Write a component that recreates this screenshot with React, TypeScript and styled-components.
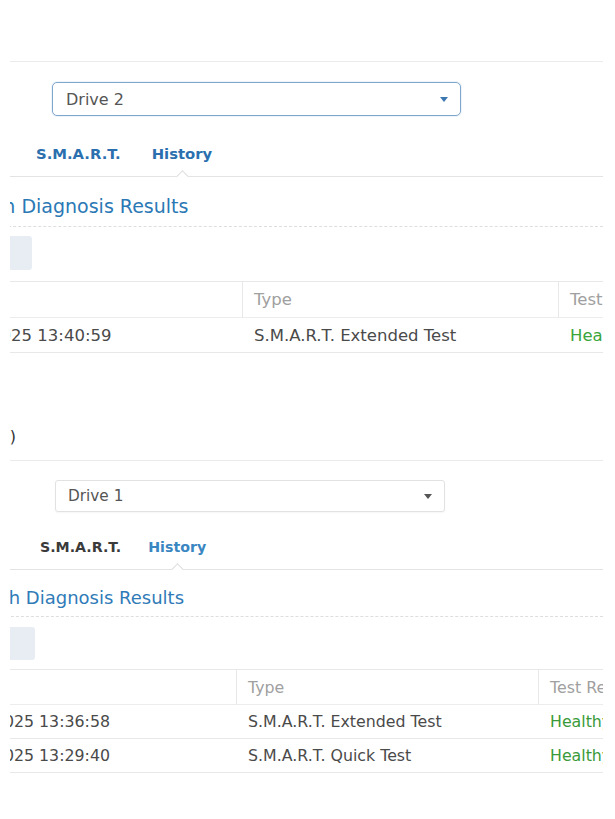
import React from "react";
import styled, { createGlobalStyle } from "styled-components";

const GlobalStyle = createGlobalStyle`
  html, body { margin: 0; padding: 0; background: #ffffff; }
  body { font-family: "DejaVu Sans", Verdana, sans-serif; color: #444; }
  #root { width: 615px; height: 819px; overflow: hidden; }
`;

interface PanelCfg {
  height: number;
  headerH: number;
  heading?: string;
  headingEnd: number;
  headingPadBottom: number;
  selectGap: number;
  selectLeft: number;
  selectWidth: number;
  selectHeight: number;
  selectFont: number;
  selectPad: number;
  focused: boolean;
  drive: string;
  tabGap: number;
  tabH: number;
  tabPad: number;
  tabSpacing: number;
  tabFont: number;
  smartColor: string;
  historyColor: string;
  titleFont: number;
  titleLine: number;
  titlePadTop: number;
  titlePadBottom: number;
  titleShift: number;
  titleColor: string;
  btnGap: number;
  btnH: number;
  btnRight: number;
  tableGap: number;
  tableShift: number;
  col1: number;
  col2: number;
  headH: number;
  rowH: number;
  cellFont: number;
  datePad: number;
  green: string;
  rows: [string, string, string][];
}

const Page = styled.main`
  width: 615px;
  height: 819px;
  display: flex;
  flex-direction: column;
  background: #fff;
`;

const Shot = styled.section<{ $h: number }>`
  margin-left: 10px;
  width: 593px;
  height: ${(p) => p.$h}px;
  overflow: hidden;
  display: flex;
  flex-direction: column;
  flex-shrink: 0;
`;

const Header = styled.header<{ $h: number; $pb: number }>`
  height: ${(p) => p.$h}px;
  box-sizing: content-box;
  border-bottom: 1px solid #ebebeb;
  display: flex;
  align-items: flex-end;
  flex-shrink: 0;
  & > div {
    margin-bottom: ${(p) => p.$pb}px;
  }
`;

const HeadingClip = styled.div<{ $end: number }>`
  width: ${(p) => p.$end}px;
  display: flex;
  justify-content: flex-end;
  white-space: nowrap;
  font-size: 16px;
  line-height: 20px;
  color: #333;
`;

const SelectRow = styled.div<{ $gap: number; $left: number }>`
  margin-top: ${(p) => p.$gap}px;
  padding-left: ${(p) => p.$left}px;
  display: flex;
  flex-shrink: 0;
`;

const Select = styled.div<{
  $w: number;
  $h: number;
  $focused: boolean;
  $font: number;
  $pad: number;
}>`
  box-sizing: border-box;
  width: ${(p) => p.$w}px;
  height: ${(p) => p.$h}px;
  border: 1px solid ${(p) => (p.$focused ? "#7fa6cc" : "#e2e2e2")};
  border-radius: ${(p) => (p.$focused ? 5 : 3)}px;
  box-shadow: ${(p) =>
    p.$focused ? "0 0 0 1px rgba(140,180,220,0.15)" : "0 1px 2px rgba(0,0,0,0.04)"};
  padding: 0 12px 0 ${(p) => p.$pad}px;
  display: flex;
  align-items: center;
  justify-content: space-between;
  font-size: ${(p) => p.$font}px;
  color: #555;
  background: #fff;
`;

const Caret = styled.span<{ $focused: boolean }>`
  width: 0;
  height: 0;
  border-left: 4.5px solid transparent;
  border-right: 4.5px solid transparent;
  border-top: 5px solid ${(p) => (p.$focused ? "#3b78b2" : "#555")};
`;

const TabBar = styled.nav<{ $gap: number; $h: number; $pad: number; $spacing: number }>`
  margin-top: ${(p) => p.$gap}px;
  height: ${(p) => p.$h}px;
  box-sizing: content-box;
  border-bottom: 1px solid #e3e3e3;
  padding-left: ${(p) => p.$pad}px;
  display: flex;
  align-items: center;
  gap: ${(p) => p.$spacing}px;
  flex-shrink: 0;
`;

const Tab = styled.div<{ $color: string; $font: number; $active?: boolean }>`
  position: relative;
  height: 100%;
  display: flex;
  align-items: center;
  font-weight: bold;
  font-size: ${(p) => p.$font}px;
  color: ${(p) => p.$color};
  &::after {
    content: "";
    display: ${(p) => (p.$active ? "block" : "none")};
    position: absolute;
    left: 50%;
    bottom: -5px;
    width: 8px;
    height: 8px;
    margin-left: -4px;
    background: #fff;
    border-top: 1px solid #dcdcdc;
    border-left: 1px solid #dcdcdc;
    transform: rotate(45deg);
  }
`;

const Title = styled.h2<{
  $font: number;
  $line: number;
  $pt: number;
  $pb: number;
  $shift: number;
  $color: string;
}>`
  margin: 0 0 0 ${(p) => p.$shift}px;
  padding: ${(p) => p.$pt}px 0 ${(p) => p.$pb}px 0;
  font-weight: normal;
  font-size: ${(p) => p.$font}px;
  line-height: ${(p) => p.$line}px;
  color: ${(p) => p.$color};
  white-space: nowrap;
  border-bottom: 1px dashed #dedede;
  flex-shrink: 0;
`;

const Toolbar = styled.div<{ $gap: number }>`
  margin-top: ${(p) => p.$gap}px;
  display: flex;
  flex-shrink: 0;
`;

const ToolButton = styled.div<{ $h: number; $right: number }>`
  margin-left: -70px;
  width: ${(p) => p.$right + 70}px;
  height: ${(p) => p.$h}px;
  background: #e8edf4;
  border-radius: 3px;
`;

const Table = styled.div<{ $gap: number; $shift: number; $c1: number; $c2: number }>`
  margin-top: ${(p) => p.$gap}px;
  margin-left: ${(p) => p.$shift}px;
  display: grid;
  grid-template-columns: ${(p) => p.$c1}px ${(p) => p.$c2}px 240px;
  border-top: 1px solid #e8e8e8;
  flex-shrink: 0;
`;

const HeadCell = styled.div<{ $h: number; $font: number; $divider: boolean }>`
  height: ${(p) => p.$h}px;
  box-sizing: content-box;
  border-bottom: 1px solid #ececec;
  border-left: ${(p) => (p.$divider ? "1px solid #e8e8e8" : "none")};
  margin-left: ${(p) => (p.$divider ? -1 : 0)}px;
  padding-left: 11px;
  display: flex;
  align-items: center;
  font-size: ${(p) => p.$font}px;
  color: #a0a0a0;
  white-space: nowrap;
`;

const Cell = styled.div<{ $h: number; $font: number; $color: string; $pad: number }>`
  height: ${(p) => p.$h}px;
  box-sizing: content-box;
  border-bottom: 1px solid #e8e8e8;
  padding-left: ${(p) => p.$pad}px;
  display: flex;
  align-items: center;
  font-size: ${(p) => p.$font}px;
  color: ${(p) => p.$color};
  white-space: nowrap;
`;

function Panel({ c }: { c: PanelCfg }) {
  const heads = ["Time", "Type", "Test Result"];
  return (
    <Shot $h={c.height}>
      <Header $h={c.headerH} $pb={c.headingPadBottom}>
        {c.heading ? <HeadingClip $end={c.headingEnd}>{c.heading}</HeadingClip> : null}
      </Header>
      <SelectRow $gap={c.selectGap} $left={c.selectLeft}>
        <Select
          $w={c.selectWidth}
          $h={c.selectHeight}
          $focused={c.focused}
          $font={c.selectFont}
          $pad={c.selectPad}
        >
          <span>{c.drive}</span>
          <Caret $focused={c.focused} />
        </Select>
      </SelectRow>
      <TabBar $gap={c.tabGap} $h={c.tabH} $pad={c.tabPad} $spacing={c.tabSpacing}>
        <Tab $color={c.smartColor} $font={c.tabFont}>
          S.M.A.R.T.
        </Tab>
        <Tab $color={c.historyColor} $font={c.tabFont} $active>
          History
        </Tab>
      </TabBar>
      <Title
        $font={c.titleFont}
        $line={c.titleLine}
        $pt={c.titlePadTop}
        $pb={c.titlePadBottom}
        $shift={c.titleShift}
        $color={c.titleColor}
      >
        Health Diagnosis Results
      </Title>
      <Toolbar $gap={c.btnGap}>
        <ToolButton $h={c.btnH} $right={c.btnRight} />
      </Toolbar>
      <Table $gap={c.tableGap} $shift={c.tableShift} $c1={c.col1} $c2={c.col2}>
        {heads.map((h, i) => (
          <HeadCell key={h} $h={c.headH} $font={c.cellFont} $divider={i > 0}>
            {h}
          </HeadCell>
        ))}
        {c.rows.map((r, ri) =>
          r.map((t, ci) => (
            <Cell
              key={`${ri}-${ci}`}
              $h={c.rowH}
              $font={c.cellFont}
              $pad={ci === 0 ? c.datePad : 11}
              $color={ci === 2 ? c.green : "#4a4a4a"}
            >
              {t}
            </Cell>
          ))
        )}
      </Table>
    </Shot>
  );
}

const first: PanelCfg = {
  height: 370,
  headerH: 61,
  headingEnd: 4,
  headingPadBottom: 0,
  selectGap: 20,
  selectLeft: 42,
  selectWidth: 409,
  selectHeight: 34,
  selectFont: 16,
  selectPad: 13,
  focused: true,
  drive: "Drive 2",
  tabGap: 14,
  tabH: 46,
  tabPad: 26,
  tabSpacing: 31,
  tabFont: 14.8,
  smartColor: "#2b6fae",
  historyColor: "#2b6fae",
  titleFont: 19,
  titleLine: 26,
  titlePadTop: 16,
  titlePadBottom: 7,
  titleShift: -57,
  titleColor: "#2a78b5",
  btnGap: 9,
  btnH: 34,
  btnRight: 22,
  tableGap: 11,
  tableShift: -79,
  col1: 312,
  col2: 316,
  headH: 35,
  rowH: 34,
  cellFont: 16.5,
  datePad: 6,
  green: "#3aa53a",
  rows: [["10/28/2025 13:40:59", "S.M.A.R.T. Extended Test", "Healthy"]],
};

const second: PanelCfg = {
  height: 449,
  headerH: 90,
  heading: "Health Info (Drive 1)",
  headingEnd: 6,
  headingPadBottom: 13,
  selectGap: 19,
  selectLeft: 45,
  selectWidth: 390,
  selectHeight: 32,
  selectFont: 15.3,
  selectPad: 12,
  focused: false,
  drive: "Drive 1",
  tabGap: 13,
  tabH: 44,
  tabPad: 30,
  tabSpacing: 27,
  tabFont: 14.2,
  smartColor: "#3a3a3a",
  historyColor: "#3a86c2",
  titleFont: 18,
  titleLine: 24,
  titlePadTop: 16,
  titlePadBottom: 6,
  titleShift: -49,
  titleColor: "#2f7bb8",
  btnGap: 10,
  btnH: 33,
  btnRight: 25,
  tableGap: 9,
  tableShift: -94,
  col1: 321,
  col2: 302,
  headH: 34,
  rowH: 33,
  cellFont: 15.8,
  datePad: 27,
  green: "#3a9a3a",
  rows: [
    ["10/26/2025 13:36:58", "S.M.A.R.T. Extended Test", "Healthy"],
    ["10/26/2025 13:29:40", "S.M.A.R.T. Quick Test", "Healthy"],
  ],
};

export default function App() {
  return (
    <>
      <GlobalStyle />
      <Page>
        <Panel c={first} />
        <Panel c={second} />
      </Page>
    </>
  );
}
